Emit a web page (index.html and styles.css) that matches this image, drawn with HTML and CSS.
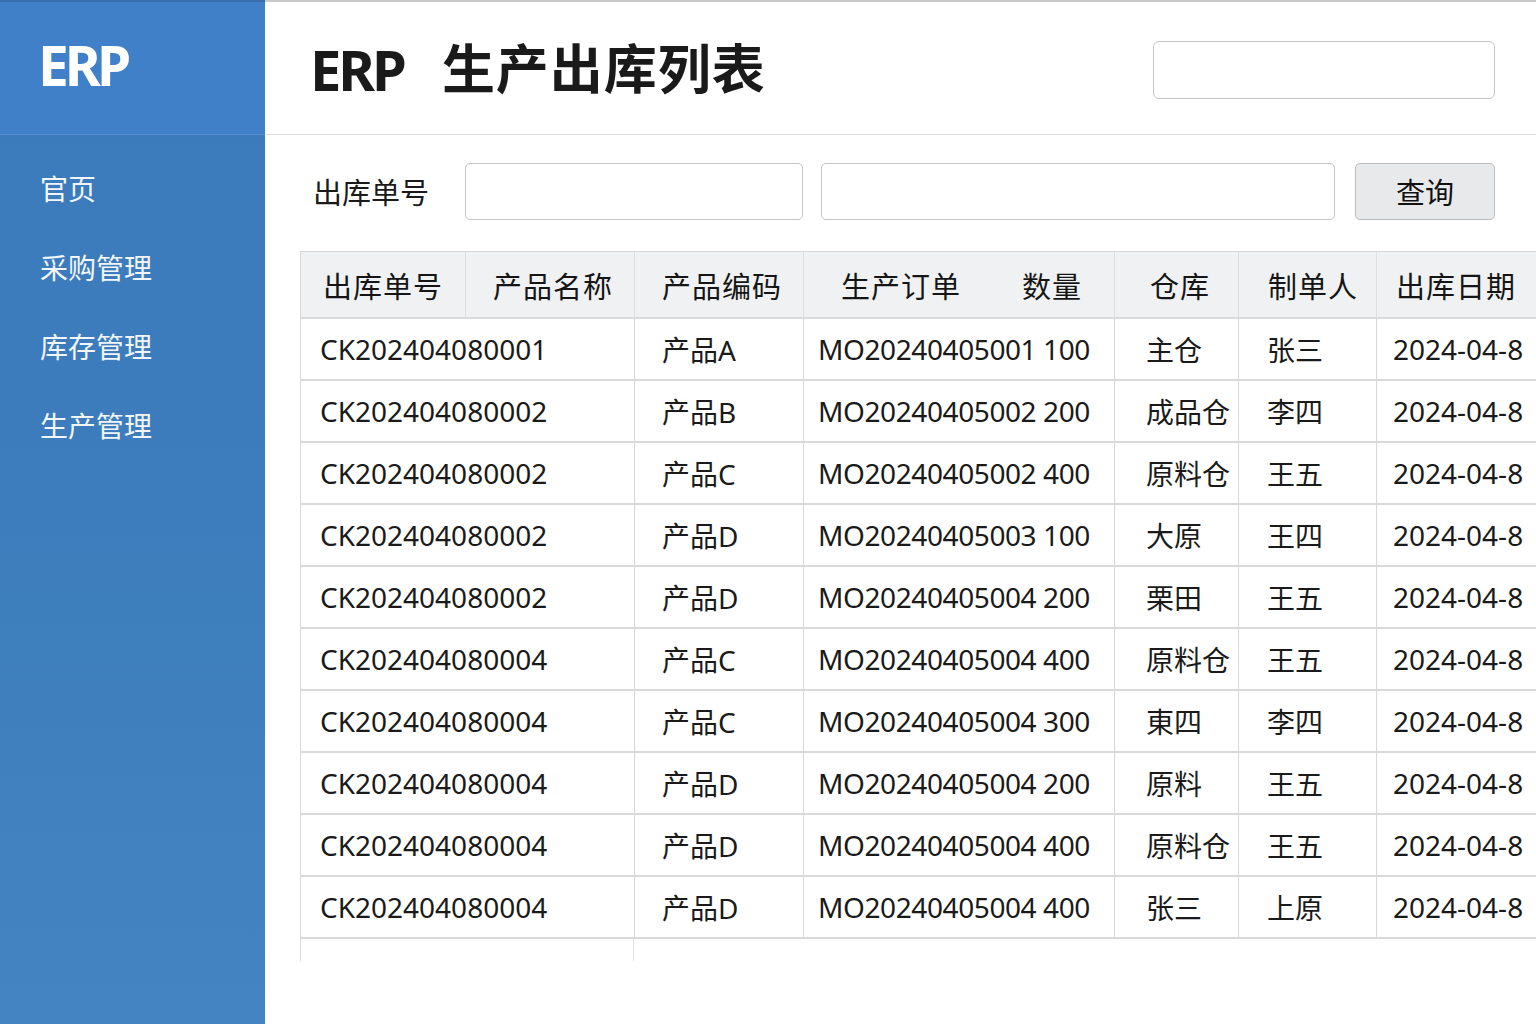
FILE: index.html
```html
<!DOCTYPE html>
<html lang="zh">
<head>
<meta charset="utf-8">
<title>ERP 生产出库列表</title>
<link rel="stylesheet" href="styles.css">
</head>
<body>
<div class="app">
  <aside class="sidebar">
    <div class="brand">ERP</div>
    <nav class="nav">
      <a class="nav-item">官页</a>
      <a class="nav-item">采购管理</a>
      <a class="nav-item">库存管理</a>
      <a class="nav-item">生产管理</a>
    </nav>
  </aside>
  <main class="main">
    <header class="topbar">
      <h1 class="title"><span class="title-erp">ERP</span><span class="title-cn">生产出库列表</span></h1>
      <div class="top-input"></div>
    </header>
    <section class="search">
      <label class="search-label">出库单号</label>
      <div class="input input-a"></div>
      <div class="input input-b"></div>
      <button class="btn">查询</button>
    </section>
    <section class="table">
      <div class="thead">
        <div class="th c1">出库单号</div>
        <div class="th c2">产品名称</div>
        <div class="th c3">产品编码</div>
        <div class="th c4"><span>生产订单</span><span>数量</span></div>
        <div class="th c5">仓库</div>
        <div class="th c6">制单人</div>
        <div class="th c7">出库日期</div>
      </div>
      <div class="tr"><div class="td d1">CK202404080001</div><div class="td d3">产品A</div><div class="td d4">MO20240405001 100</div><div class="td d5">主仓</div><div class="td d6">张三</div><div class="td d7">2024-04-8</div></div>
      <div class="tr"><div class="td d1">CK202404080002</div><div class="td d3">产品B</div><div class="td d4">MO20240405002 200</div><div class="td d5">成品仓</div><div class="td d6">李四</div><div class="td d7">2024-04-8</div></div>
      <div class="tr"><div class="td d1">CK202404080002</div><div class="td d3">产品C</div><div class="td d4">MO20240405002 400</div><div class="td d5">原料仓</div><div class="td d6">王五</div><div class="td d7">2024-04-8</div></div>
      <div class="tr"><div class="td d1">CK202404080002</div><div class="td d3">产品D</div><div class="td d4">MO20240405003 100</div><div class="td d5">大原</div><div class="td d6">王四</div><div class="td d7">2024-04-8</div></div>
      <div class="tr"><div class="td d1">CK202404080002</div><div class="td d3">产品D</div><div class="td d4">MO20240405004 200</div><div class="td d5">栗田</div><div class="td d6">王五</div><div class="td d7">2024-04-8</div></div>
      <div class="tr"><div class="td d1">CK202404080004</div><div class="td d3">产品C</div><div class="td d4">MO20240405004 400</div><div class="td d5">原料仓</div><div class="td d6">王五</div><div class="td d7">2024-04-8</div></div>
      <div class="tr"><div class="td d1">CK202404080004</div><div class="td d3">产品C</div><div class="td d4">MO20240405004 300</div><div class="td d5">東四</div><div class="td d6">李四</div><div class="td d7">2024-04-8</div></div>
      <div class="tr"><div class="td d1">CK202404080004</div><div class="td d3">产品D</div><div class="td d4">MO20240405004 200</div><div class="td d5">原料</div><div class="td d6">王五</div><div class="td d7">2024-04-8</div></div>
      <div class="tr"><div class="td d1">CK202404080004</div><div class="td d3">产品D</div><div class="td d4">MO20240405004 400</div><div class="td d5">原料仓</div><div class="td d6">王五</div><div class="td d7">2024-04-8</div></div>
      <div class="tr"><div class="td d1">CK202404080004</div><div class="td d3">产品D</div><div class="td d4">MO20240405004 400</div><div class="td d5">张三</div><div class="td d6">上原</div><div class="td d7">2024-04-8</div></div>
      <div class="tail"><div class="tail-a"></div><div class="tail-b"></div></div>
    </section>
  </main>
</div>
</body>
</html>
```

FILE: styles.css
```css
* { box-sizing: border-box; }
html, body { margin: 0; padding: 0; }
body {
  width: 1536px;
  height: 1024px;
  overflow: hidden;
  font-family: "Noto Sans", "Noto Sans CJK SC", sans-serif;
  color: #1c1c1c;
  background: #fff;
}
.app { display: flex; height: 1024px; }

.sidebar {
  width: 265px;
  flex: none;
  display: flex;
  flex-direction: column;
  background: linear-gradient(180deg, #3b79bb 0%, #3d7ebd 60%, #4484c2 100%);
  border-top: 2px solid #3a6fae;
}
.brand {
  height: 133px;
  padding: 28px 0 0 38px;
  background: #4080c9;
  border-bottom: 1px solid #5a90cf;
  color: #fff;
  font-weight: 700;
  font-size: 55px;
  letter-spacing: -4px;
  line-height: 70px;
}
.nav { display: flex; flex-direction: column; padding: 34px 0 0 40px; gap: 38px; }
.nav-item {
  color: #f2f6fb;
  font-size: 28px;
  line-height: 41px;
}

.main { flex: 1; display: flex; flex-direction: column; overflow: hidden; border-top: 2px solid #c8c8c8; }
.topbar {
  height: 133px;
  flex: none;
  display: flex;
  align-items: center;
  justify-content: space-between;
  padding: 0 41px 0 45px;
  border-bottom: 1px solid #dedede;
}
.title { margin: 0; display: flex; align-items: center; font-weight: 700; color: #1a1a1a; padding-top: 2px; }
.title-erp { font-size: 56px; letter-spacing: -3px; line-height: 70px; }
.title-cn { font-size: 53px; letter-spacing: 1px; margin-left: 38px; line-height: 70px; }
.top-input {
  width: 342px;
  height: 58px;
  border: 1px solid #c6c6c6;
  border-radius: 6px;
  margin-top: 4px;
  background: #fff;
}

.search {
  flex: none;
  display: flex;
  align-items: center;
  padding: 27px 0 0 48px;
  height: 85px;
}
.search-label { font-size: 29px; width: 152px; color: #1a1a1a; }
.input {
  height: 57px;
  border: 1px solid #c4c4c4;
  border-radius: 5px;
  background: #fff;
}
.input-a { width: 338px; }
.input-b { width: 514px; margin-left: 18px; }
.btn {
  width: 140px;
  height: 57px;
  margin-left: 20px;
  border: 1px solid #bdbdbd;
  border-radius: 5px;
  background: #e8e9eb;
  font-family: "Noto Sans", "Noto Sans CJK SC", sans-serif;
  font-size: 29px;
  color: #111;
  padding: 0;
}

.table {
  margin: 31px 0 0 35px;
  width: 1300px;
}
.thead, .tr {
  display: grid;
  grid-template-columns: 165px 169px 169px 311px 124px 138px 224px;
}
.thead {
  height: 68px;
  background: #eff1f3;
  border-top: 1px solid #d6d8da;
  border-left: 1px solid #d6d8da;
  border-bottom: 2px solid #d9dbdd;
}
.th {
  display: flex;
  align-items: center;
  font-size: 29px;
  font-weight: 400;
  color: #151515;
  border-right: 1px solid #dcdee0;
  letter-spacing: 1px;
}
.c1 { padding-left: 22px; }
.c2 { padding-left: 27px; }
.c3 { padding-left: 27px; }
.c4 { padding: 0 32px 0 37px; justify-content: space-between; }
.c5 { padding-left: 35px; }
.c6 { padding-left: 29px; }
.c7 { padding-left: 19px; border-right: none; }

.tr {
  height: 62px;
  border-left: 1px solid #d6d8da;
  border-bottom: 2px solid #d8d9db;
}
.td {
  display: flex;
  align-items: center;
  font-size: 28px;
  color: #1a1a1a;
  border-right: 1px solid #d6d8da;
  white-space: nowrap;
}
.d1 { grid-column: 1 / span 2; padding-left: 19px; }
.d3 { padding-left: 27px; }
.d4 { padding-left: 14px; letter-spacing: -0.4px; }
.d5 { padding-left: 31px; }
.d6 { padding-left: 28px; }
.d7 { padding-left: 16px; border-right: none; }

.tail { display: flex; height: 70px; }
.tail-a {
  width: 334px;
  height: 22px;
  border-left: 1px solid #d6d8da;
  border-right: 1px solid #e2e3e5;
}
.tail-b { display: none; }
```
